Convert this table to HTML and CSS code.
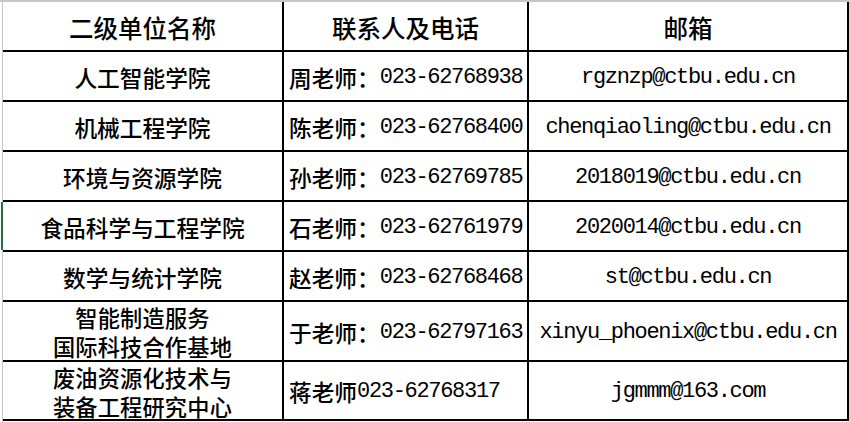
FILE: index.html
```html
<!DOCTYPE html>
<html lang="zh-CN">
<head>
<meta charset="utf-8">
<title>二级单位联系方式</title>
<link rel="stylesheet" href="styles.css">
</head>
<body>
<div class="sheet">
  <div class="frame">
    <div class="grid">
      <div class="cell h center">二级单位名称</div>
      <div class="cell h center">联系人及电话</div>
      <div class="cell h center">邮箱</div>

      <div class="cell center">人工智能学院</div>
      <div class="cell left">周老师：<span class="lat">023-62768938</span></div>
      <div class="cell center"><span class="lat">rgznzp@ctbu.edu.cn</span></div>

      <div class="cell center">机械工程学院</div>
      <div class="cell left">陈老师：<span class="lat">023-62768400</span></div>
      <div class="cell center"><span class="lat">chenqiaoling@ctbu.edu.cn</span></div>

      <div class="cell center">环境与资源学院</div>
      <div class="cell left">孙老师：<span class="lat">023-62769785</span></div>
      <div class="cell center"><span class="lat">2018019@ctbu.edu.cn</span></div>

      <div class="cell center selected">食品科学与工程学院</div>
      <div class="cell left">石老师：<span class="lat">023-62761979</span></div>
      <div class="cell center"><span class="lat">2020014@ctbu.edu.cn</span></div>

      <div class="cell center">数学与统计学院</div>
      <div class="cell left">赵老师：<span class="lat">023-62768468</span></div>
      <div class="cell center"><span class="lat">st@ctbu.edu.cn</span></div>

      <div class="cell center two">智能制造服务<br>国际科技合作基地</div>
      <div class="cell left">于老师：<span class="lat">023-62797163</span></div>
      <div class="cell center"><span class="lat">xinyu_phoenix@ctbu.edu.cn</span></div>

      <div class="cell center two last">废油资源化技术与<br>装备工程研究中心</div>
      <div class="cell left">蒋老师<span class="lat">023-62768317</span></div>
      <div class="cell center"><span class="lat">jgmmm@163.com</span></div>
    </div>
  </div>
</div>
</body>
</html>
```

FILE: styles.css
```css
html, body {
  margin: 0;
  padding: 0;
  background: #ffffff;
}

.sheet {
  width: 849px;
  height: 422px;
  border-top: 2px solid #c6c6c6;
  box-sizing: border-box;
  padding-left: 2px;
}

.frame {
  border-left: 1px solid #c6c6c6;
  height: 100%;
}

.grid {
  display: grid;
  grid-template-columns: 279px 243px 318px;
  grid-template-rows: 48px 48px 48px 48px 48px 48px 58px 57px;
  gap: 2px;
  padding: 0 2px 2px 0;
  background: #000000;
  width: max-content;
}

.cell {
  background: #ffffff;
  display: flex;
  align-items: center;
  font-family: "Noto Sans CJK SC", "Noto Sans", sans-serif;
  font-size: 22.7px;
  font-weight: 500;
  color: #000000;
  line-height: 29px;
  white-space: nowrap;
  padding-top: 2px;
  box-sizing: border-box;
}

.h {
  font-size: 24.5px;
}

.center {
  justify-content: center;
  text-align: center;
}

.left {
  justify-content: flex-start;
  padding-left: 5px;
}

.two {
  font-size: 22.2px;
  line-height: 29px;
  letter-spacing: 0.2px;
}

.last {
  padding-top: 2px;
}

.selected {
  box-shadow: -2px 0 0 #217346;
}

.lat {
  font-family: "Liberation Mono", monospace;
  font-size: 22px;
  font-weight: 400;
  letter-spacing: -1.32px;
}
```
